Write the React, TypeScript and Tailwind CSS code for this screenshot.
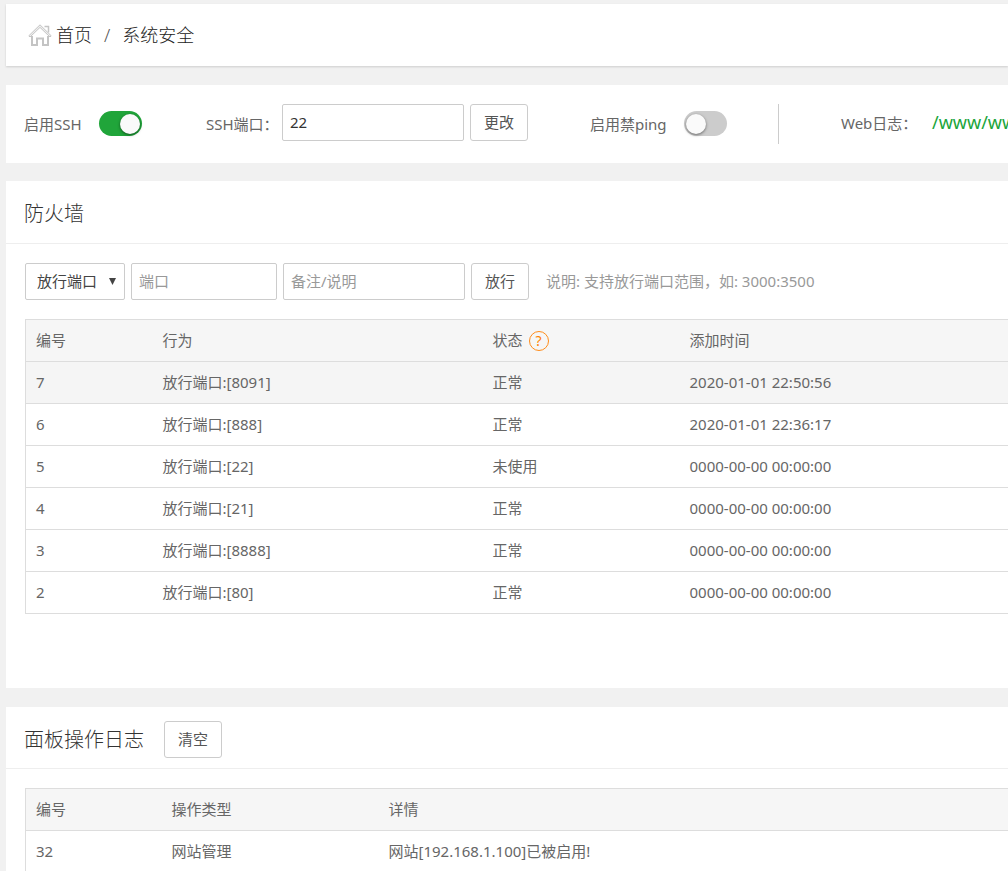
import type { InputHTMLAttributes, ReactNode } from "react";
import clsx from "clsx";

const rules = [
  { id: 7, action: "放行端口:[8091]", status: "正常", time: "2020-01-01 22:50:56" },
  { id: 6, action: "放行端口:[888]", status: "正常", time: "2020-01-01 22:36:17" },
  { id: 5, action: "放行端口:[22]", status: "未使用", time: "0000-00-00 00:00:00" },
  { id: 4, action: "放行端口:[21]", status: "正常", time: "0000-00-00 00:00:00" },
  { id: 3, action: "放行端口:[8888]", status: "正常", time: "0000-00-00 00:00:00" },
  { id: 2, action: "放行端口:[80]", status: "正常", time: "0000-00-00 00:00:00" },
];

const logs = [
  { id: 32, type: "网站管理", detail: "网站[192.168.1.100]已被启用!" },
];

function HomeIcon() {
  return (
    <svg
      className="h-6 w-6 shrink-0"
      viewBox="0 0 24 24"
      fill="none"
      stroke="#c4c4c4"
      strokeWidth="2"
      aria-hidden="true"
    >
      <path
        d="M.8 12.8 12 1.8l11.200 11-1.2 1.2L12 4.4 2 14Z"
        fill="#eee"
        strokeWidth="1"
      />
      <path d="M16.500 3.500h4v6" strokeWidth="1.5" />
      <path d="M4 13v9h5v-6.500h6V22h5v-9" />
    </svg>
  );
}

function Button({ children }: { children: ReactNode }) {
  return (
    <button
      type="button"
      className="h-[37px] shrink-0 rounded-[3px] border border-[#ccc] bg-white px-[13px] pb-0.5 text-[#555]"
    >
      {children}
    </button>
  );
}

function TextInput({
  className,
  ...props
}: InputHTMLAttributes<HTMLInputElement>) {
  return (
    <input
      type="text"
      className={clsx(
        "h-[37px] shrink-0 rounded-[2px] border border-[#ccc] bg-white px-[7px] pb-0.5 text-[#333] placeholder:text-[#999]",
        className,
      )}
      {...props}
    />
  );
}

function Switch({ id, on }: { id: string; on?: boolean }) {
  return (
    <input
      id={id}
      type="checkbox"
      role="switch"
      defaultChecked={on}
      className="mt-[7px] flex h-[25px] w-[43px] shrink-0 appearance-none items-center rounded-full bg-[#ccc] px-0.5 before:h-5 before:w-5 before:rounded-full before:bg-[#fafafa] before:shadow-[0_1px_3px_rgba(0,0,0,0.5)] checked:justify-end checked:bg-[#20a53a]"
    />
  );
}

function HeadCell({ children }: { children: ReactNode }) {
  return (
    <th className="px-[10px] pb-0.5 text-left font-normal whitespace-nowrap">
      {children}
    </th>
  );
}

function Cell({ children }: { children: ReactNode }) {
  return <td className="px-[10px] pb-0.5 whitespace-nowrap">{children}</td>;
}

function Breadcrumb() {
  return (
    <nav className="flex h-[62px] items-center bg-white pl-[22px] text-lg font-light text-[#222] shadow-[0_1px_2px_rgba(0,0,0,0.15)]">
      <HomeIcon />
      <a href="#home" className="ml-1">
        首页
      </a>
      <span className="mx-3 text-[#555]">/</span>
      <span>系统安全</span>
    </nav>
  );
}

function ServiceBar() {
  return (
    <section className="mt-[19px] flex h-[78px] items-start overflow-hidden bg-white pt-[19px] pl-[18px] whitespace-nowrap">
      <div className="flex w-[182px] shrink-0 items-start">
        <label htmlFor="ssh" className="w-[75px] leading-10">
          启用SSH
        </label>
        <Switch id="ssh" on />
      </div>
      <div className="flex w-[384px] shrink-0 items-start">
        <label htmlFor="ssh-port" className="w-[76px] leading-10">
          SSH端口：
        </label>
        <TextInput id="ssh-port" defaultValue="22" className="mr-1.5 w-[182px]" />
        <Button>更改</Button>
      </div>
      <div className="flex w-[188px] shrink-0 items-start">
        <label htmlFor="ping" className="w-[94px] leading-10">
          启用禁ping
        </label>
        <Switch id="ping" />
      </div>
      <div className="flex h-10 shrink-0 items-center border-l border-[#ccc] pb-0.5 pl-[62px]">
        <span className="w-[91px]">Web日志：</span>
        <a href="#logs" className="pb-0.5 text-lg text-[#20a53a]">
          /www/wwwlogs
        </a>
      </div>
    </section>
  );
}

function Firewall() {
  return (
    <section className="mt-[18px] bg-white pb-[74px]">
      <div className="flex h-[63px] items-center border-b border-[#eee] pt-1 pl-[18px]">
        <h2 className="text-xl font-light text-[#333]">防火墙</h2>
      </div>
      <form className="flex items-center gap-1.5 pt-[19px] pl-[19px] whitespace-nowrap">
        <div className="relative shrink-0">
          <select
            aria-label="类型"
            className="h-[37px] w-[100px] appearance-none rounded-[2px] border border-[#ccc] bg-white pb-0.5 pl-[11px] text-[#444]"
          >
            <option>放行端口</option>
            <option>屏蔽IP</option>
          </select>
          <svg
            className="pointer-events-none absolute top-[14px] right-2 h-2 w-2"
            viewBox="0 0 8 8"
            fill="#444"
            aria-hidden="true"
          >
            <path d="M0 1h7L3.500 8Z" />
          </svg>
        </div>
        <TextInput aria-label="端口" placeholder="端口" className="w-[146px]" />
        <TextInput
          aria-label="备注/说明"
          placeholder="备注/说明"
          className="w-[182px]"
        />
        <Button>放行</Button>
        <span className="ml-[11px] pb-0.5 text-[#999]">
          说明: 支持放行端口范围，如: 3000:3500
        </span>
      </form>
      <div className="mt-[19px] pl-[19px]">
        <table className="w-full table-fixed border-collapse border border-r-0 border-[#ddd]">
          <colgroup>
            <col className="w-[127px]" />
            <col className="w-[330px]" />
            <col className="w-[197px]" />
            <col />
          </colgroup>
          <thead>
            <tr className="h-[42px] border-b border-[#ddd] bg-[#f6f6f6]">
              <HeadCell>编号</HeadCell>
              <HeadCell>行为</HeadCell>
              <HeadCell>
                <span className="flex items-center gap-1.5">
                  状态
                  <a
                    href="#help"
                    aria-label="帮助"
                    className="mt-0.5 flex h-5 w-5 items-center justify-center rounded-full border border-[#ff8c1a] text-sm text-[#ff7f00]"
                  >
                    ?
                  </a>
                </span>
              </HeadCell>
              <HeadCell>添加时间</HeadCell>
            </tr>
          </thead>
          <tbody>
            {rules.map((rule, i) => (
              <tr
                key={rule.id}
                className={clsx(
                  "h-[42px] border-b border-[#ddd]",
                  i === 0 && "bg-[#f5f5f5]",
                )}
              >
                <Cell>{rule.id}</Cell>
                <Cell>{rule.action}</Cell>
                <Cell>{rule.status}</Cell>
                <Cell>{rule.time}</Cell>
              </tr>
            ))}
          </tbody>
        </table>
      </div>
    </section>
  );
}

function OperationLog() {
  return (
    <section className="mt-[19px] bg-white pb-5">
      <div className="flex h-[62px] items-center gap-5 border-b border-[#eee] pt-1 pl-[18px]">
        <h2 className="text-xl font-light text-[#333]">面板操作日志</h2>
        <Button>清空</Button>
      </div>
      <div className="mt-[19px] pl-[19px]">
        <table className="w-full table-fixed border-collapse border border-r-0 border-[#ddd]">
          <colgroup>
            <col className="w-[136px]" />
            <col className="w-[217px]" />
            <col />
          </colgroup>
          <thead>
            <tr className="h-[42px] border-b border-[#ddd] bg-[#f6f6f6]">
              <HeadCell>编号</HeadCell>
              <HeadCell>操作类型</HeadCell>
              <HeadCell>详情</HeadCell>
            </tr>
          </thead>
          <tbody>
            {logs.map((log) => (
              <tr key={log.id} className="h-[42px] border-b border-[#ddd]">
                <Cell>{log.id}</Cell>
                <Cell>{log.type}</Cell>
                <Cell>{log.detail}</Cell>
              </tr>
            ))}
          </tbody>
        </table>
      </div>
    </section>
  );
}

export default function App() {
  return (
    <main className="h-screen overflow-hidden bg-[#f1f1f1] pt-1 pl-1.5 font-['Noto_Sans','Noto_Sans_CJK_SC',sans-serif] text-[15px] leading-5 text-[#666]">
      <Breadcrumb />
      <ServiceBar />
      <Firewall />
      <OperationLog />
    </main>
  );
}
